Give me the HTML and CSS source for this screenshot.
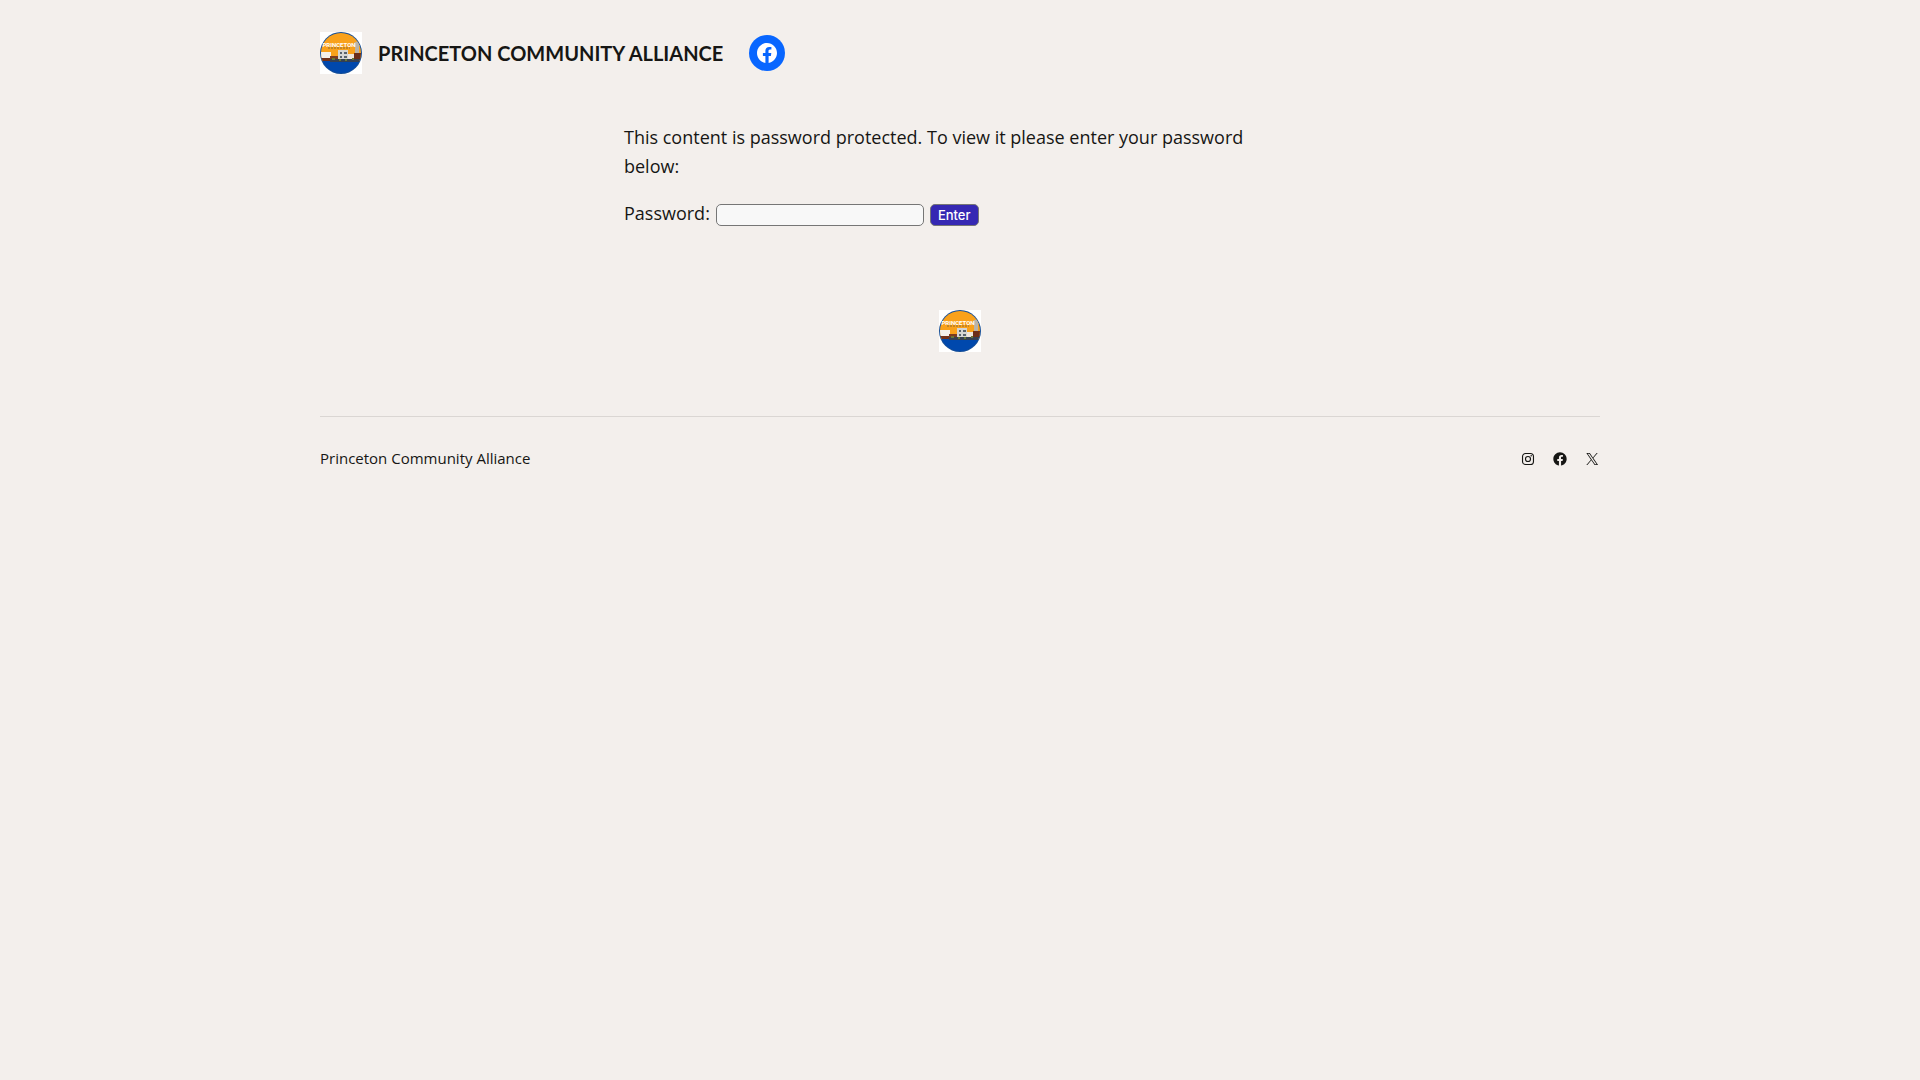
FILE: index.html
```html
<!DOCTYPE html>
<html lang="en">
<head>
    <meta charset="UTF-8">
    <meta name="viewport" content="width=device-width, initial-scale=1.0">
    <title>Princeton Community Alliance</title>
    <link rel="stylesheet" href="styles.css">
</head>
<body>
    <!-- Shared logo artwork -->
    <svg class="defs" aria-hidden="true">
        <defs>
            <clipPath id="badge"><circle cx="21" cy="21" r="20"/></clipPath>
            <symbol id="logo" viewBox="0 0 42 42">
                <rect width="42" height="42" fill="#fff"/>
                <circle cx="21" cy="21" r="21" fill="#174f96"/>
                <g clip-path="url(#badge)">
                    <rect width="42" height="30" fill="#f9a11b"/>
                    <path d="M8 16h22" stroke="#8a6a35" stroke-width="1" stroke-dasharray="2 1"/>
                    <path d="M34 11q3-3 6 0v2l-1 2v9h-4v-9l-1-2z" fill="#b9b4aa"/>
                    <rect x="0" y="25" width="13" height="4" fill="#713018"/>
                    <rect x="1" y="20" width="10" height="6" fill="#f4f0ea"/>
                    <rect x="10" y="24" width="10" height="5" fill="#7b3b20"/>
                    <rect x="18" y="18" width="10" height="12" fill="#d5d6d4"/>
                    <path d="M20 21h2m2 0h3M20 25h2m2 0h3" stroke="#59636d" stroke-width="2"/>
                    <rect x="28" y="22" width="7" height="7" fill="#eee6dc"/>
                    <rect x="34" y="21" width="8" height="7" fill="#6d2e19"/>
                    <rect x="0" y="29" width="42" height="13" fill="#0048ad"/>
                    <rect x="10" y="27" width="32" height="3" fill="#354052"/>
                    <path d="M12 27h3m4 1h2m4 0h2m5-1h2" stroke="#687735" stroke-width="2"/>
                </g>
                <text class="logo-text" x="19" y="15" text-anchor="middle">PRINCETON</text>
            </symbol>
            <symbol id="facebook" viewBox="0 0 24 24">
                <path d="M12 2C6.5 2 2 6.5 2 12c0 5 3.7 9.1 8.4 9.9v-7H7.9V12h2.5V9.8c0-2.5 1.5-3.9 3.8-3.9 1.1 0 2.2.2 2.2.2v2.5h-1.3c-1.2 0-1.6.8-1.6 1.6V12h2.8l-.4 2.9h-2.3v7C18.3 21.1 22 17 22 12c0-5.5-4.5-10-10-10z"/>
            </symbol>
        </defs>
    </svg>

    <!-- Header -->
    <header class="site-header">
        <a class="logo" href="#" aria-label="Princeton Community Alliance"><svg><use href="#logo"/></svg></a>
        <h1 class="site-title"><a href="#">PRINCETON COMMUNITY ALLIANCE</a></h1>
        <a class="facebook-link" href="#" aria-label="Facebook"><svg><use href="#facebook"/></svg></a>
    </header>

    <!-- Password form -->
    <main class="content">
        <form method="post">
            <p>This content is password protected. To view it please enter your password below:</p>
            <p class="password-row">
                <label for="password">Password:</label>
                <input type="password" id="password" name="password">
                <button type="submit">Enter</button>
            </p>
        </form>
    </main>

    <!-- Footer -->
    <footer class="site-footer">
        <a class="logo" href="#" aria-label="Princeton Community Alliance"><svg><use href="#logo"/></svg></a>
        <div class="footer-bar">
            <a href="#">Princeton Community Alliance</a>
            <nav class="social" aria-label="Social links">
                <a href="#" aria-label="Instagram">
                    <svg viewBox="0 0 24 24">
                        <g fill="none" stroke="currentColor" stroke-width="1.7">
                            <rect x="3.8" y="3.8" width="16.4" height="16.4" rx="4.6"/>
                            <circle cx="12" cy="12" r="3.8"/>
                        </g>
                        <circle cx="16.8" cy="7.2" r="1.1"/>
                    </svg>
                </a>
                <a href="#" aria-label="Facebook"><svg><use href="#facebook"/></svg></a>
                <a href="#" aria-label="X">
                    <svg viewBox="0 0 24 24">
                        <path d="M13.982 10.622 20.54 3h-1.554l-5.693 6.618L8.745 3H3.5l6.876 10.007L3.5 21h1.554l6.012-6.989L15.868 21h5.245l-7.131-10.378Zm-2.128 2.474-.697-.997-5.543-7.93H8l4.474 6.4.697.996 5.815 8.318h-2.387l-4.745-6.787Z"/>
                    </svg>
                </a>
            </nav>
        </div>
    </footer>
</body>
</html>
```

FILE: styles.css
```css
/* General Styles */
* {
    box-sizing: border-box;
}

body {
    margin: 0;
    padding: 32px;
    background-color: #f3efec;
    color: #161614;
    font-family: "Open Sans", sans-serif;
    font-size: 18px;
    line-height: 29px;
}

a {
    color: inherit;
    text-decoration: none;
}

svg {
    display: block;
    width: 100%;
    height: 100%;
    fill: currentColor;
}

.defs {
    position: absolute;
    width: 0;
    height: 0;
}

.logo {
    flex: none;
    width: 42px;
    height: 42px;
}

.logo-text {
    font-family: Roboto, sans-serif;
    font-size: 6px;
    font-weight: bold;
    fill: #fff;
}

/* Header */
.site-header {
    display: flex;
    align-items: center;
    max-width: 1280px;
    margin: 0 auto;
}

.site-title {
    margin: 0 26px 0 16px;
    font-family: Lato, sans-serif;
    font-size: 20px;
    font-weight: bold;
}

.facebook-link {
    width: 36px;
    height: 36px;
    padding: 6px;
    border-radius: 50%;
    background-color: #0866ff;
    color: #fff;
}

/* Password form */
.content {
    max-width: 672px;
    margin: 49px auto 0;
}

.content p {
    margin: 0 0 18px;
}

.password-row {
    display: flex;
    align-items: baseline;
    gap: 6px;
}

.password-row input,
.password-row button {
    height: 22px;
    border: 1px solid #767676;
    border-radius: 5px;
    font-family: Inter, sans-serif;
    font-size: 13px;
}

.password-row input {
    width: 208px;
    padding: 1px 4px;
    background-color: #f8f8f8;
}

.password-row button {
    padding: 0 7px;
    background-color: #3528b3;
    color: #fff;
    font-weight: 500;
    cursor: pointer;
}

/* Footer */
.site-footer {
    display: flex;
    flex-direction: column;
    align-items: center;
    gap: 64px;
    max-width: 1280px;
    margin: 82px auto 0;
}

.footer-bar {
    display: flex;
    justify-content: space-between;
    align-items: center;
    width: 100%;
    padding-top: 27px;
    border-top: 1px solid #dad6d3;
    font-size: 15px;
}

.social {
    display: flex;
    gap: 16px;
}

.social a {
    width: 16px;
    height: 16px;
}
```
